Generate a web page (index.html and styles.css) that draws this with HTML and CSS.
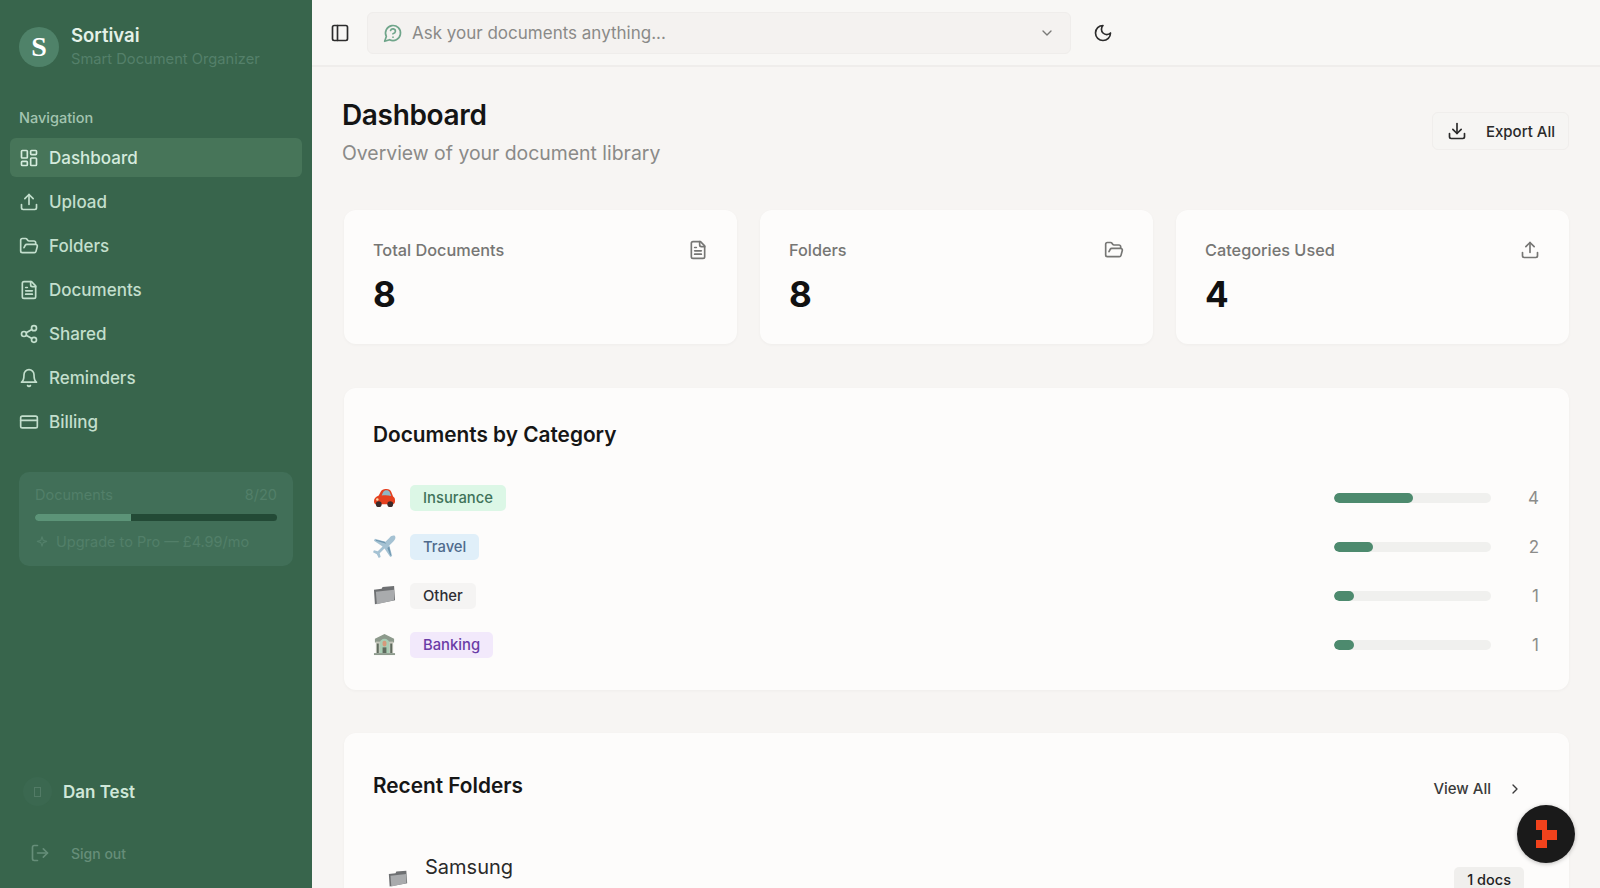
FILE: index.html
```html
<!DOCTYPE html>
<html lang="en">
<head>
  <meta charset="UTF-8" />
  <meta name="viewport" content="width=device-width, initial-scale=1.0"/>
  <title>Dashboard - Sortivai</title>
  <link rel="stylesheet" href="styles.css">
</head>
<body>
  <div class="app">
    <!-- Sidebar -->
    <aside class="sidebar">
      <div class="brand">
        <div class="brand-logo">S</div>
        <div class="brand-text">
          <div class="brand-name">Sortivai</div>
          <div class="brand-sub">Smart Document Organizer</div>
        </div>
      </div>

      <div class="nav-label">Navigation</div>
      <nav class="nav">
        <a class="nav-item active">
          <svg class="icon" viewBox="0 0 24 24"><rect x="3" y="3" width="7" height="9" rx="1"/><rect x="14" y="3" width="7" height="5" rx="1"/><rect x="14" y="12" width="7" height="9" rx="1"/><rect x="3" y="16" width="7" height="5" rx="1"/></svg>
          Dashboard
        </a>
        <a class="nav-item">
          <svg class="icon" viewBox="0 0 24 24"><path d="M21 15v4a2 2 0 0 1-2 2H5a2 2 0 0 1-2-2v-4"/><polyline points="17 8 12 3 7 8"/><line x1="12" y1="3" x2="12" y2="15"/></svg>
          Upload
        </a>
        <a class="nav-item">
          <svg class="icon" viewBox="0 0 24 24"><path d="m6 14 1.5-2.9A2 2 0 0 1 9.24 10H20a2 2 0 0 1 1.94 2.5l-1.54 6a2 2 0 0 1-1.95 1.5H4a2 2 0 0 1-2-2V5a2 2 0 0 1 2-2h3.9a2 2 0 0 1 1.69.9l.81 1.2a2 2 0 0 0 1.67.9H18a2 2 0 0 1 2 2v2"/></svg>
          Folders
        </a>
        <a class="nav-item">
          <svg class="icon" viewBox="0 0 24 24"><path d="M15 2H6a2 2 0 0 0-2 2v16a2 2 0 0 0 2 2h12a2 2 0 0 0 2-2V7Z"/><path d="M14 2v4a2 2 0 0 0 2 2h4"/><path d="M10 9H8"/><path d="M16 13H8"/><path d="M16 17H8"/></svg>
          Documents
        </a>
        <a class="nav-item">
          <svg class="icon" viewBox="0 0 24 24"><circle cx="18" cy="5" r="3"/><circle cx="6" cy="12" r="3"/><circle cx="18" cy="19" r="3"/><line x1="8.59" y1="13.51" x2="15.42" y2="17.49"/><line x1="15.41" y1="6.51" x2="8.59" y2="10.49"/></svg>
          Shared
        </a>
        <a class="nav-item">
          <svg class="icon" viewBox="0 0 24 24"><path d="M6 8a6 6 0 0 1 12 0c0 7 3 9 3 9H3s3-2 3-9"/><path d="M10.3 21a1.94 1.94 0 0 0 3.4 0"/></svg>
          Reminders
        </a>
        <a class="nav-item">
          <svg class="icon" viewBox="0 0 24 24"><rect x="2" y="5" width="20" height="14" rx="2"/><line x1="2" y1="10" x2="22" y2="10"/></svg>
          Billing
        </a>
      </nav>

      <div class="plan">
        <div class="plan-row"><span>Documents</span><span>8/20</span></div>
        <div class="plan-bar"><div class="plan-fill"></div></div>
        <div class="plan-upgrade">
          <svg class="icon-xs" viewBox="0 0 24 24"><path d="M12 3l2 6 6 2-6 2-2 6-2-6-6-2 6-2z"/></svg>
          Upgrade to Pro — £4.99/mo
        </div>
      </div>

      <div class="user">
        <div class="user-avatar"><span class="tofu"></span></div>
        <div class="user-name">Dan Test</div>
      </div>
      <a class="signout">
        <svg class="icon" viewBox="0 0 24 24"><path d="M9 21H5a2 2 0 0 1-2-2V5a2 2 0 0 1 2-2h4"/><polyline points="16 17 21 12 16 7"/><line x1="21" y1="12" x2="9" y2="12"/></svg>
        Sign out
      </a>
    </aside>

    <div class="content">
      <!-- Top bar -->
      <header class="topbar">
        <svg class="icon top-icon" viewBox="0 0 24 24"><rect x="3" y="3" width="18" height="18" rx="2"/><path d="M9 3v18"/></svg>
        <div class="ask">
          <svg class="icon ask-icon" viewBox="0 0 24 24"><path d="M7.9 20A9 9 0 1 0 4 16.1L2 22Z"/><path d="M9.09 9a3 3 0 0 1 5.83 1c0 2-3 3-3 3"/><path d="M12 17h.01"/></svg>
          <span class="ask-text">Ask your documents anything...</span>
          <svg class="icon-sm ask-chevron" viewBox="0 0 24 24"><path d="m6 9 6 6 6-6"/></svg>
        </div>
        <svg class="icon top-icon moon" viewBox="0 0 24 24"><path d="M12 3a6 6 0 0 0 9 9 9 9 0 1 1-9-9Z"/></svg>
      </header>

      <main class="page">
        <div class="page-head">
          <div>
            <h1>Dashboard</h1>
            <p class="page-sub">Overview of your document library</p>
          </div>
          <button class="export-btn">
            <svg class="icon" viewBox="0 0 24 24"><path d="M21 15v4a2 2 0 0 1-2 2H5a2 2 0 0 1-2-2v-4"/><polyline points="7 10 12 15 17 10"/><line x1="12" y1="15" x2="12" y2="3"/></svg>
            Export All
          </button>
        </div>

        <div class="stats">
          <div class="card stat">
            <div class="stat-top">
              <span>Total Documents</span>
              <svg class="icon" viewBox="0 0 24 24"><path d="M15 2H6a2 2 0 0 0-2 2v16a2 2 0 0 0 2 2h12a2 2 0 0 0 2-2V7Z"/><path d="M14 2v4a2 2 0 0 0 2 2h4"/><path d="M10 9H8"/><path d="M16 13H8"/><path d="M16 17H8"/></svg>
            </div>
            <div class="stat-num">8</div>
          </div>
          <div class="card stat">
            <div class="stat-top">
              <span>Folders</span>
              <svg class="icon" viewBox="0 0 24 24"><path d="m6 14 1.5-2.9A2 2 0 0 1 9.24 10H20a2 2 0 0 1 1.94 2.5l-1.54 6a2 2 0 0 1-1.95 1.5H4a2 2 0 0 1-2-2V5a2 2 0 0 1 2-2h3.9a2 2 0 0 1 1.69.9l.81 1.2a2 2 0 0 0 1.67.9H18a2 2 0 0 1 2 2v2"/></svg>
            </div>
            <div class="stat-num">8</div>
          </div>
          <div class="card stat">
            <div class="stat-top">
              <span>Categories Used</span>
              <svg class="icon" viewBox="0 0 24 24"><path d="M21 15v4a2 2 0 0 1-2 2H5a2 2 0 0 1-2-2v-4"/><polyline points="17 8 12 3 7 8"/><line x1="12" y1="3" x2="12" y2="15"/></svg>
            </div>
            <div class="stat-num">4</div>
          </div>
        </div>

        <section class="card panel">
          <h2>Documents by Category</h2>
          <div class="cat-list">
            <div class="cat-row">
              <svg class="emoji" viewBox="0 0 24 24"><path class="car-body" d="M1 16c0-3 2-5 5-6l2-4c1-2 3-3 5-3h1c3 0 4 1 5 3l2 5c2 1 2 3 2 5 0 2-1 3-3 3H3c-1 0-2-1-2-3z"/><path class="car-glass" d="M9 10l1.500-3.500c1-1.500 2-2 3.500-2s3 .5 3.500 2L19 10.500c-3-1-7-1-10-.5z"/><circle class="car-lamp" cx="4.500" cy="14" r="1.300"/><circle class="car-wheel" cx="6" cy="19" r="3"/><circle class="car-wheel" cx="18" cy="19" r="3"/></svg>
              <span class="badge badge-green">Insurance</span>
              <div class="bar"><div class="bar-fill" style="width: 50%"></div></div>
              <span class="cat-count">4</span>
            </div>
            <div class="cat-row">
              <svg class="emoji" viewBox="0 0 24 24"><path class="plane" d="M23 1c1 2 0 4-2 6l-4 4 3 11-2 1-6-9-5 5 1 4-2 1-2-4-4-2 1-2 4 1 5-5L1 6l1-2 11 3 4-4c2-2 4-3 6-2z"/><path class="plane-wing" d="M3 5l9 2 2 2-11-3zM17 12l2 9-1 .5-3-8z"/></svg>
              <span class="badge badge-blue">Travel</span>
              <div class="bar"><div class="bar-fill" style="width: 25%"></div></div>
              <span class="cat-count">2</span>
            </div>
            <div class="cat-row">
              <svg class="emoji" viewBox="0 0 24 24"><path class="folder-back" d="M1 6l8-1 1-2 12-1 1 15-21 4z"/><path class="folder-front" d="M3 8l19-2 0 11-18 4z"/></svg>
              <span class="badge badge-gray">Other</span>
              <div class="bar"><div class="bar-fill" style="width: 12.5%"></div></div>
              <span class="cat-count">1</span>
            </div>
            <div class="cat-row">
              <svg class="emoji" viewBox="0 0 24 24"><path class="bank-roof" d="M12 1l10 5v4H2V6z"/><rect class="bank-wall" x="3" y="9" width="18" height="12"/><path class="bank-arch" d="M7 21V11a5 5 0 0 1 10 0v10z"/><rect class="bank-seal" x="10" y="8" width="4" height="6" rx="2"/><rect class="bank-door" x="10" y="15" width="4" height="6"/><rect class="bank-door" x="4" y="11" width="2" height="10"/><rect class="bank-door" x="18" y="11" width="2" height="10"/><rect class="bank-roof" x="1" y="21" width="22" height="2"/></svg>
              <span class="badge badge-purple">Banking</span>
              <div class="bar"><div class="bar-fill" style="width: 12.5%"></div></div>
              <span class="cat-count">1</span>
            </div>
          </div>
        </section>

        <section class="card panel recent">
          <div class="recent-head">
            <h2>Recent Folders</h2>
            <a class="view-all">View All
              <svg class="icon-sm" viewBox="0 0 24 24"><path d="m9 18 6-6-6-6"/></svg>
            </a>
          </div>
          <div class="folder-row">
            <svg class="emoji folder-emoji" viewBox="0 0 24 24"><path class="folder-back" d="M1 6l8-1 1-2 12-1 1 15-21 4z"/><path class="folder-front" d="M3 8l19-2 0 11-18 4z"/></svg>
            <span class="folder-name">Samsung</span>
            <span class="badge badge-docs">1 docs</span>
          </div>
        </section>
      </main>
    </div>
  </div>

  <button class="fab">
    <svg viewBox="0 0 28 28"><rect x="4" y="0" width="11" height="10"/><rect x="10" y="10" width="15" height="10"/><rect x="4" y="20" width="11" height="9"/></svg>
  </button>
</body>
</html>
```

FILE: styles.css
```css
* {
  box-sizing: border-box;
}

body {
  margin: 0;
  background-color: #f7f5f3;
  color: #141414;
  font-family: Inter, 'Noto Sans', sans-serif;
  overflow: hidden;
}

.app {
  display: grid;
  grid-template-columns: 312px 1fr;
  height: 100vh;
  overflow: hidden;
}

svg {
  fill: none;
  stroke: currentColor;
  stroke-width: 2;
  stroke-linecap: round;
  stroke-linejoin: round;
  flex-shrink: 0;
}

.icon {
  width: 20px;
  height: 20px;
}

.icon-sm {
  width: 16px;
  height: 16px;
}

.icon-xs {
  width: 14px;
  height: 14px;
}

/* Sidebar */
.sidebar {
  display: flex;
  flex-direction: column;
  height: 888px;
  background-color: #38654c;
  color: #c9e2d2;
}

.brand {
  display: flex;
  align-items: center;
  gap: 12px;
  padding: 24px 19px 0;
}

.brand-logo {
  width: 40px;
  height: 40px;
  border-radius: 50%;
  background-color: #4f8269;
  color: #fff;
  display: flex;
  align-items: center;
  justify-content: center;
  font-family: 'Liberation Serif', serif;
  font-weight: bold;
  font-size: 28px;
}

.brand-name {
  color: #e4f1e8;
  font-size: 18.5px;
  font-weight: 600;
  line-height: 22px;
}

.brand-sub {
  margin-top: 3px;
  color: #54806a;
  font-size: 14.7px;
  line-height: 20px;
}

.nav-label {
  margin-top: 39px;
  padding-left: 19px;
  color: #a3c4b0;
  font-size: 14.5px;
  font-weight: 500;
  line-height: 20px;
}

.nav {
  display: flex;
  flex-direction: column;
  margin-top: 10px;
  padding: 0 10px;
}

.nav-item {
  display: flex;
  align-items: center;
  gap: 10px;
  height: 39px;
  margin-bottom: 5px;
  padding-left: 9px;
  border-radius: 6px;
  color: #c3dfcd;
  font-size: 17px;
  font-weight: 500;
}

.nav-item.active {
  background-color: #477559;
  color: #d5ebdd;
}

.plan {
  margin: 26px 19px 0;
  height: 94px;
  padding: 14px 16px 0;
  border-radius: 10px;
  background-color: #416f58;
  color: #527f69;
  font-size: 14.5px;
}

.plan-row {
  display: flex;
  justify-content: space-between;
  line-height: 18px;
}

.plan-bar {
  height: 7px;
  margin-top: 10px;
  border-radius: 4px;
  background-color: #234a36;
  overflow: hidden;
}

.plan-fill {
  width: 39.5%;
  height: 100%;
  background-color: #5c9478;
}

.plan-upgrade {
  display: flex;
  align-items: center;
  gap: 7px;
  margin-top: 12px;
  line-height: 18px;
}

.user {
  display: flex;
  align-items: center;
  gap: 11px;
  margin-top: auto;
  padding-left: 23px;
}

.user-avatar {
  width: 29px;
  height: 29px;
  border-radius: 50%;
  background-color: #3b6850;
  display: flex;
  align-items: center;
  justify-content: center;
}

.tofu {
  width: 7px;
  height: 10px;
  border: 1px solid #527b66;
}

.user-name {
  color: #cfe7d8;
  font-size: 17px;
  font-weight: 600;
}

.signout {
  display: flex;
  align-items: center;
  gap: 21px;
  margin: 37px 0 25px;
  padding-left: 30px;
  color: #668e79;
  font-size: 14px;
  font-weight: 500;
}

/* Top bar */
.content {
  min-width: 0;
  height: 888px;
  overflow: hidden;
}

.topbar {
  display: flex;
  align-items: center;
  height: 67px;
  padding: 0 0 0 18px;
  border-bottom: 2px solid #efedeb;
  background-color: #f8f7f5;
  color: #2c2c2c;
}

.top-icon {
  width: 20px;
  height: 20px;
}

.ask {
  display: flex;
  align-items: center;
  width: 704px;
  height: 42px;
  margin-left: 17px;
  padding: 0 15px 0 15px;
  border: 1px solid #efedeb;
  border-radius: 6px;
  background-color: #f4f2f0;
}

.ask-icon {
  color: #6fa58a;
}

.ask-text {
  flex: 1;
  margin-left: 9px;
  color: #8a8a88;
  font-size: 17px;
}

.ask-chevron {
  color: #7a7a78;
}

.moon {
  margin-left: 22px;
}

/* Page */
.page {
  padding: 30px 31px 0 30px;
}

.page-head {
  display: flex;
  justify-content: space-between;
  align-items: flex-start;
}

h1 {
  margin: 0;
  font-size: 28px;
  font-weight: 600;
  line-height: 36px;
  letter-spacing: -0.35px;
}

.page-sub {
  margin: 6px 0 0;
  color: #8a8a88;
  font-size: 19.4px;
  line-height: 28px;
}

.export-btn {
  display: flex;
  align-items: center;
  gap: 19px;
  height: 38px;
  margin-top: 15px;
  padding: 0 13px 0 14px;
  border: 1px solid #f0eeec;
  border-radius: 6px;
  background-color: #f6f5f3;
  color: #2a2a2a;
  font-family: Inter, sans-serif;
  font-size: 15px;
  font-weight: 500;
}

.card {
  border-radius: 12px;
  background-color: #fdfcfb;
  box-shadow: 0 1px 3px rgba(60, 50, 40, 0.04);
}

.stats {
  display: grid;
  grid-template-columns: repeat(3, 1fr);
  gap: 23px;
  margin: 43px 0 0 2px;
}

.stat {
  height: 134px;
  padding: 30px 29px 0 29px;
}

.stat-top {
  display: flex;
  justify-content: space-between;
  align-items: center;
  color: #767674;
  font-size: 16.3px;
  font-weight: 500;
  line-height: 20px;
}

.stat-num {
  margin-top: 12px;
  color: #111;
  font-size: 35px;
  font-weight: 700;
  line-height: 44px;
}

.panel {
  margin: 44px 0 0 2px;
  padding: 33px 30px 21px 29px;
}

h2 {
  margin: 0;
  color: #161616;
  font-size: 20.8px;
  font-weight: 600;
  line-height: 28px;
}

.cat-list {
  display: flex;
  flex-direction: column;
  margin-top: 24px;
}

.cat-row {
  display: flex;
  align-items: center;
  height: 49px;
}

.emoji {
  width: 23px;
  height: 23px;
  stroke: none;
}

.badge {
  margin-left: 14px;
  padding: 0 13px;
  height: 26px;
  border-radius: 5px;
  font-size: 14.8px;
  font-weight: 500;
  line-height: 26px;
}

.badge-green {
  background-color: #dcf7e6;
  color: #40735a;
}

.badge-blue {
  background-color: #e0eff9;
  color: #4f6b8d;
}

.badge-gray {
  background-color: #f5f4f3;
  color: #2e2e33;
}

.badge-purple {
  background-color: #f2e9fb;
  color: #6a3ca6;
}

.bar {
  width: 157px;
  height: 10px;
  margin-left: auto;
  border-radius: 5px;
  background-color: #f0f0ee;
  overflow: hidden;
}

.bar-fill {
  height: 100%;
  border-radius: 5px;
  background-color: #4d8a6e;
}

.cat-count {
  width: 48px;
  color: #8c8c8a;
  font-size: 17px;
  text-align: right;
}

/* Emoji shapes */
.car-body { fill: #e5401f; }
.car-glass { fill: #8fb6c4; }
.car-lamp { fill: #f7d9a8; }
.car-wheel { fill: #3a2a2a; }
.plane { fill: #a5c2d3; }
.plane-wing { fill: #6f97b0; }
.folder-back { fill: #6e7072; }
.folder-front { fill: #a9abad; }
.bank-roof { fill: #8d9a8c; }
.bank-wall { fill: #c7c8bd; }
.bank-arch { fill: #a9cdb4; }
.bank-door { fill: #5f6b5e; }
.bank-seal { fill: #d69a7c; }

/* Recent folders */
.recent {
  height: 300px;
  margin-top: 43px;
  padding-top: 39px;
}

.recent-head {
  display: flex;
  justify-content: space-between;
  align-items: center;
}

.view-all {
  display: flex;
  align-items: center;
  gap: 16px;
  padding: 5px 16px 0 0;
  color: #3a3a3a;
  font-size: 15px;
  font-weight: 500;
}

.folder-row {
  display: flex;
  align-items: flex-start;
  margin-top: 54px;
  padding-left: 15px;
}

.folder-emoji {
  width: 20px;
  height: 20px;
  margin-top: 15px;
}

.folder-name {
  margin-left: 17px;
  color: #2a2a2a;
  font-size: 20px;
  line-height: 26px;
}

.badge-docs {
  margin: 13px 15px 0 auto;
  background-color: #f0efed;
  color: #222;
  font-size: 14.5px;
}

/* Floating button */
.fab {
  position: fixed;
  left: 1517px;
  top: 805px;
  width: 58px;
  height: 58px;
  padding: 15px;
  border: none;
  border-radius: 50%;
  background-color: #1a1a1a;
  box-shadow: 0 1px 4px rgba(0, 0, 0, 0.25);
}

.fab svg {
  display: block;
  width: 28px;
  height: 28px;
  fill: #f0421c;
  stroke: none;
}
```
